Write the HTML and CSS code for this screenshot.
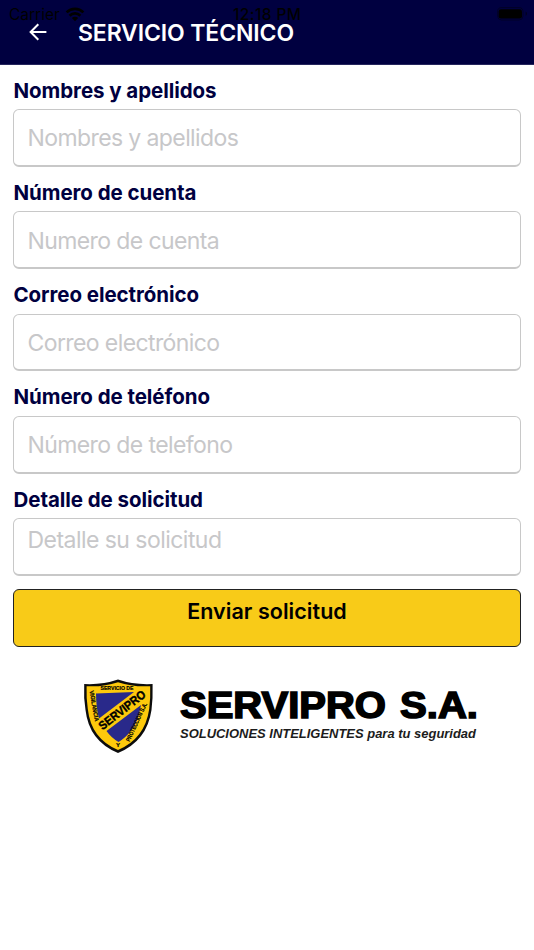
FILE: index.html
```html
<!DOCTYPE html>
<html lang="es">
<head>
    <meta charset="UTF-8">
    <meta name="viewport" content="width=device-width, initial-scale=1.0">
    <title>Servicio Técnico</title>
    <link rel="stylesheet" href="styles.css">
</head>
<body>
    <header class="header">
        <div class="status-bar">
            <span class="carrier">Carrier</span>
            <svg class="wifi" width="20" height="15" viewBox="0 0 20 15">
                <path d="M1.6 5.4a12 12 0 0 1 16.8 0M4.6 8.7a7.6 7.6 0 0 1 10.8 0" fill="none" stroke="#000" stroke-width="2.7"/>
                <path d="M10 14.2l-3.2-3.1a4.6 4.6 0 0 1 6.4 0z"/>
            </svg>
            <span class="time">12:18 PM</span>
            <svg class="battery" width="32" height="15" viewBox="0 0 32 15">
                <rect x="-0.4" y="0.6" width="25.4" height="12.4" rx="4" fill="none" stroke="#000" stroke-opacity="0.4"/>
                <rect x="0.6" y="2.2" width="23.4" height="9.4" rx="2.4"/>
                <path d="M27.6 4.6v4.4a2.4 2.4 0 0 0 0-4.4z" fill-opacity="0.5"/>
            </svg>
        </div>
        <svg class="back" width="18" height="18" viewBox="0 0 18 18">
            <path d="M9.3 1.2L1.6 9l7.7 7.8M1.6 9H17.4" fill="none" stroke="#fff" stroke-width="2"/>
        </svg>
        <h1>SERVICIO TÉCNICO</h1>
    </header>

    <form class="form">
        <div class="field">
            <label for="name">Nombres y apellidos</label>
            <input id="name" type="text" placeholder="Nombres y apellidos">
        </div>
        <div class="field">
            <label for="account">Número de cuenta</label>
            <input id="account" type="text" placeholder="Numero de cuenta">
        </div>
        <div class="field">
            <label for="email">Correo electrónico</label>
            <input id="email" type="email" placeholder="Correo electrónico">
        </div>
        <div class="field">
            <label for="phone">Número de teléfono</label>
            <input id="phone" type="tel" placeholder="Número de telefono">
        </div>
        <div class="field">
            <label for="detail">Detalle de solicitud</label>
            <textarea id="detail" placeholder="Detalle su solicitud"></textarea>
        </div>
        <button type="button" class="submit">Enviar solicitud</button>
    </form>

    <div class="logo">
        <svg width="400" height="80" viewBox="80 676 400 80">
            <!-- shield -->
            <path d="M84.2 684Q102 685 118 679.5Q134 685 152.6 684Q153 698 151.5 710Q147 741 118 753Q89 741 85.5 710Q83.5 698 84.2 684z" fill="#0c0c0c"/>
            <path d="M86.6 686.2Q103 687.2 118 682.2Q133 687.2 150.2 686.2Q150.6 698 149.2 709Q145 738.5 118 750Q91 738.5 87.8 709Q86.2 698 86.6 686.2z" fill="#fdc90c"/>
            <path d="M96 693.5L134 692L99 718.500Q96 707 96 693.5z" fill="#29298a"/>
            <path d="M106.5 731L141 705Q138 722 131.5 730Q126 737.5 118.5 742Q111 737.5 106.5 731z" fill="#29298a"/>
            <text class="shield-name" transform="translate(102.5 730.5) rotate(-38)" textLength="56" lengthAdjust="spacingAndGlyphs">SERVIPRO</text>
            <text class="shield-small" x="100.5" y="690.3" textLength="33" lengthAdjust="spacingAndGlyphs">SERVICIO DE</text>
            <text class="shield-small" transform="translate(89.5 691) rotate(80)" textLength="31" lengthAdjust="spacingAndGlyphs">VIGILANCIA</text>
            <text class="shield-small" transform="translate(129.5 742) rotate(-65)" textLength="42" lengthAdjust="spacingAndGlyphs">PROTECCION S.A.</text>
            <text class="shield-small" x="116" y="747">Y</text>
            <!-- wordmark -->
            <text class="brand" x="180" y="718" textLength="206" lengthAdjust="spacingAndGlyphs">SERVIPRO</text>
            <text class="brand" x="400" y="718" textLength="78" lengthAdjust="spacingAndGlyphs">S.A.</text>
            <text class="slogan" x="180" y="738.3" textLength="296" lengthAdjust="spacingAndGlyphs">SOLUCIONES INTELIGENTES para tu seguridad</text>
        </svg>
    </div>
</body>
</html>
```
FILE: styles.css
```css
* {
    box-sizing: border-box;
    margin: 0;
    padding: 0;
}

body {
    font-family: Inter, "Liberation Sans", sans-serif;
    background: #fff;
    min-height: 100vh;
}

.header {
    position: relative;
    display: flex;
    align-items: center;
    gap: 31px;
    height: 65px;
    padding: 0 29px;
    background: #000040;
    border-bottom: 1px solid #26265d;
}

.header h1 {
    padding-top: 1px;
    color: #fff;
    font-size: 23px;
    font-weight: 600;
    line-height: 28px;
    letter-spacing: -0.12px;
}

/* drawn over the header, like the system status bar */
.status-bar {
    position: absolute;
    top: 5px;
    left: 9px;
    right: 4px;
    display: grid;
    grid-template-columns: 56px 168px 1fr auto;
    align-items: center;
    height: 18px;
    font-size: 15.5px;
    color: #000;
}

.battery {
    overflow: visible;
}

.time {
    font-weight: 500;
    letter-spacing: 0.4px;
    white-space: nowrap;
}

.form {
    display: flex;
    flex-direction: column;
    gap: 13.2px;
    padding: 12.6px 13px 0;
}

.field {
    display: flex;
    flex-direction: column;
    gap: 6.5px;
}

label {
    padding-left: 0.5px;
    color: #000040;
    font-size: 20.5px;
    font-weight: 700;
    line-height: 25px;
    letter-spacing: -0.06px;
}

input,
textarea {
    display: block;
    width: 100%;
    height: 57.6px;
    padding: 2px 13.5px 0;
    border: 1px solid #c8c8c8;
    border-bottom-width: 2px;
    border-radius: 6px;
    background: #fff;
    font-family: inherit;
    font-size: 23px;
    letter-spacing: -0.6px;
    resize: none;
}

textarea {
    padding-top: 7px;
    line-height: 28px;
    letter-spacing: -0.54px;
    overflow: hidden;
}

::placeholder {
    color: #c7c7c9;
    opacity: 1;
}

.submit {
    height: 58px;
    padding-bottom: 14px;
    border: 1px solid #222;
    border-radius: 6px;
    background: #f8cb18;
    color: #000;
    font-family: inherit;
    font-size: 21.5px;
    font-weight: 600;
    letter-spacing: 0.05px;
}

.logo {
    display: flex;
    padding: 29px 0 0 80px;
}

.logo text {
    font-family: "Liberation Sans", Arial, sans-serif;
    font-weight: 700;
}

.brand {
    font-size: 36.5px;
    stroke: #000;
    stroke-width: 1.6px;
}

.slogan {
    font-size: 13px;
    font-style: italic;
    fill: #1c1c1c;
}

.shield-name {
    font-size: 12px;
    stroke: #000;
    stroke-width: 0.4px;
}

.shield-small {
    font-size: 6px;
    stroke: #000;
    stroke-width: 0.2px;
}
```
